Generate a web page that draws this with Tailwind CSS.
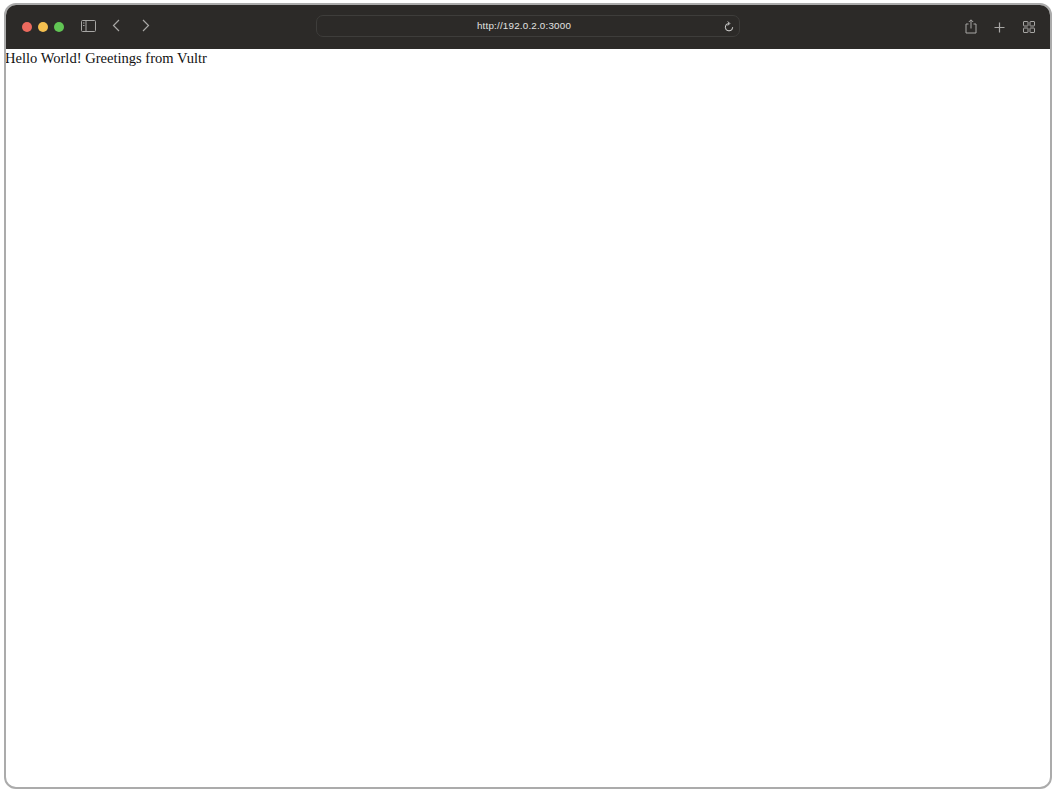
<!DOCTYPE html>
<html lang="en">
<head>
	<meta charset="UTF-8">
	<title>Browser window</title>
	<script src="https://cdn.jsdelivr.net/npm/@tailwindcss/browser@4"></script>
</head>
<body class="bg-white h-[792px] w-[1056px] overflow-hidden p-[3px_4px_3px_4px]">
	<div class="h-[786px] w-[1048px] border-2 border-[#ababab] rounded-[12px] overflow-hidden flex flex-col bg-white">
		<!-- Toolbar -->
		<div class="h-[44px] shrink-0 bg-[#2c2a28] relative flex items-center pl-[16px] pr-[15px]">
			<div class="flex items-center gap-[6px]">
				<span class="block w-[10px] h-[10px] rounded-full bg-[#ec6a5e]"></span>
				<span class="block w-[10px] h-[10px] rounded-full bg-[#f4bf4f]"></span>
				<span class="block w-[10px] h-[10px] rounded-full bg-[#61c554]"></span>
			</div>
			<!-- Sidebar, back, forward -->
			<svg class="ml-[17px] -mt-[3px]" width="15" height="12" viewBox="0 0 15 12" fill="none" stroke="#a8a7a5" stroke-width="1">
				<rect x="0.5" y="0.5" width="14" height="11" rx="1"/>
				<path d="M5 0.5v11"/>
				<path d="M2 3h1.500M2 5.500h1.500" stroke-width="1.200"/>
			</svg>
			<svg class="ml-[16px] -mt-[4px]" width="8" height="13" viewBox="0 0 8 13" fill="none" stroke="#a8a7a5" stroke-width="1.200">
				<path d="M7 1 1.500 6.500 7 12"/>
			</svg>
			<svg class="ml-[22px] -mt-[4px]" width="8" height="13" viewBox="0 0 8 13" fill="none" stroke="#a8a7a5" stroke-width="1.200">
				<path d="M1 1l5.500 5.500L1 12"/>
			</svg>
			<!-- Address bar -->
			<div class="absolute left-[310px] top-[10px] w-[424px] h-[22px] rounded-[7px] border border-[#3e3d3b] flex items-center justify-center">
				<span class="text-[9.8px] tracking-[0.2px] text-[#e2e2e1] font-['Liberation_Sans',sans-serif] -ml-[8px]">http://192.0.2.0:3000</span>
				<svg class="absolute right-[5px] top-[5px]" width="10" height="12" viewBox="0 0 10 12" fill="none" stroke="#d6d6d5" stroke-width="1">
					<path d="M5 2.500a3.700 3.700 0 1 0 3.700 3.700"/>
					<path d="M3.800 0.500 5.800 2.500 3.800 4.500"/>
				</svg>
			</div>
			<!-- Share, new tab, tabs -->
			<div class="ml-auto flex items-center">
				<svg class="-mt-[1px]" width="12" height="15" viewBox="0 0 12 15" fill="none" stroke="#a8a7a5" stroke-width="1">
					<path d="M3.500 5H1v9h10V5H8.500"/>
					<path d="M6 9.500V1M3.800 3 6 0.800 8.200 3"/>
				</svg>
				<svg class="ml-[17px]" width="11" height="11" viewBox="0 0 11 11" fill="none" stroke="#a8a7a5" stroke-width="1.200">
					<path d="M5.500 0.500v10M0.500 5.500h10"/>
				</svg>
				<svg class="ml-[18px]" width="12" height="12" viewBox="0 0 12 12" fill="none" stroke="#a8a7a5" stroke-width="1">
					<rect x="0.500" y="0.500" width="4.500" height="4.500" rx="0.500"/>
					<rect x="7" y="0.500" width="4.500" height="4.500" rx="0.500"/>
					<rect x="0.500" y="7" width="4.500" height="4.500" rx="0.500"/>
					<rect x="7" y="7" width="4.500" height="4.500" rx="0.500"/>
				</svg>
			</div>
		</div>
		<!-- Page -->
		<p class="text-[14.56px] leading-[18px] text-[#111] font-['Liberation_Serif',serif] -ml-[1px]">Hello World! Greetings from Vultr</p>
	</div>
</body>
</html>
